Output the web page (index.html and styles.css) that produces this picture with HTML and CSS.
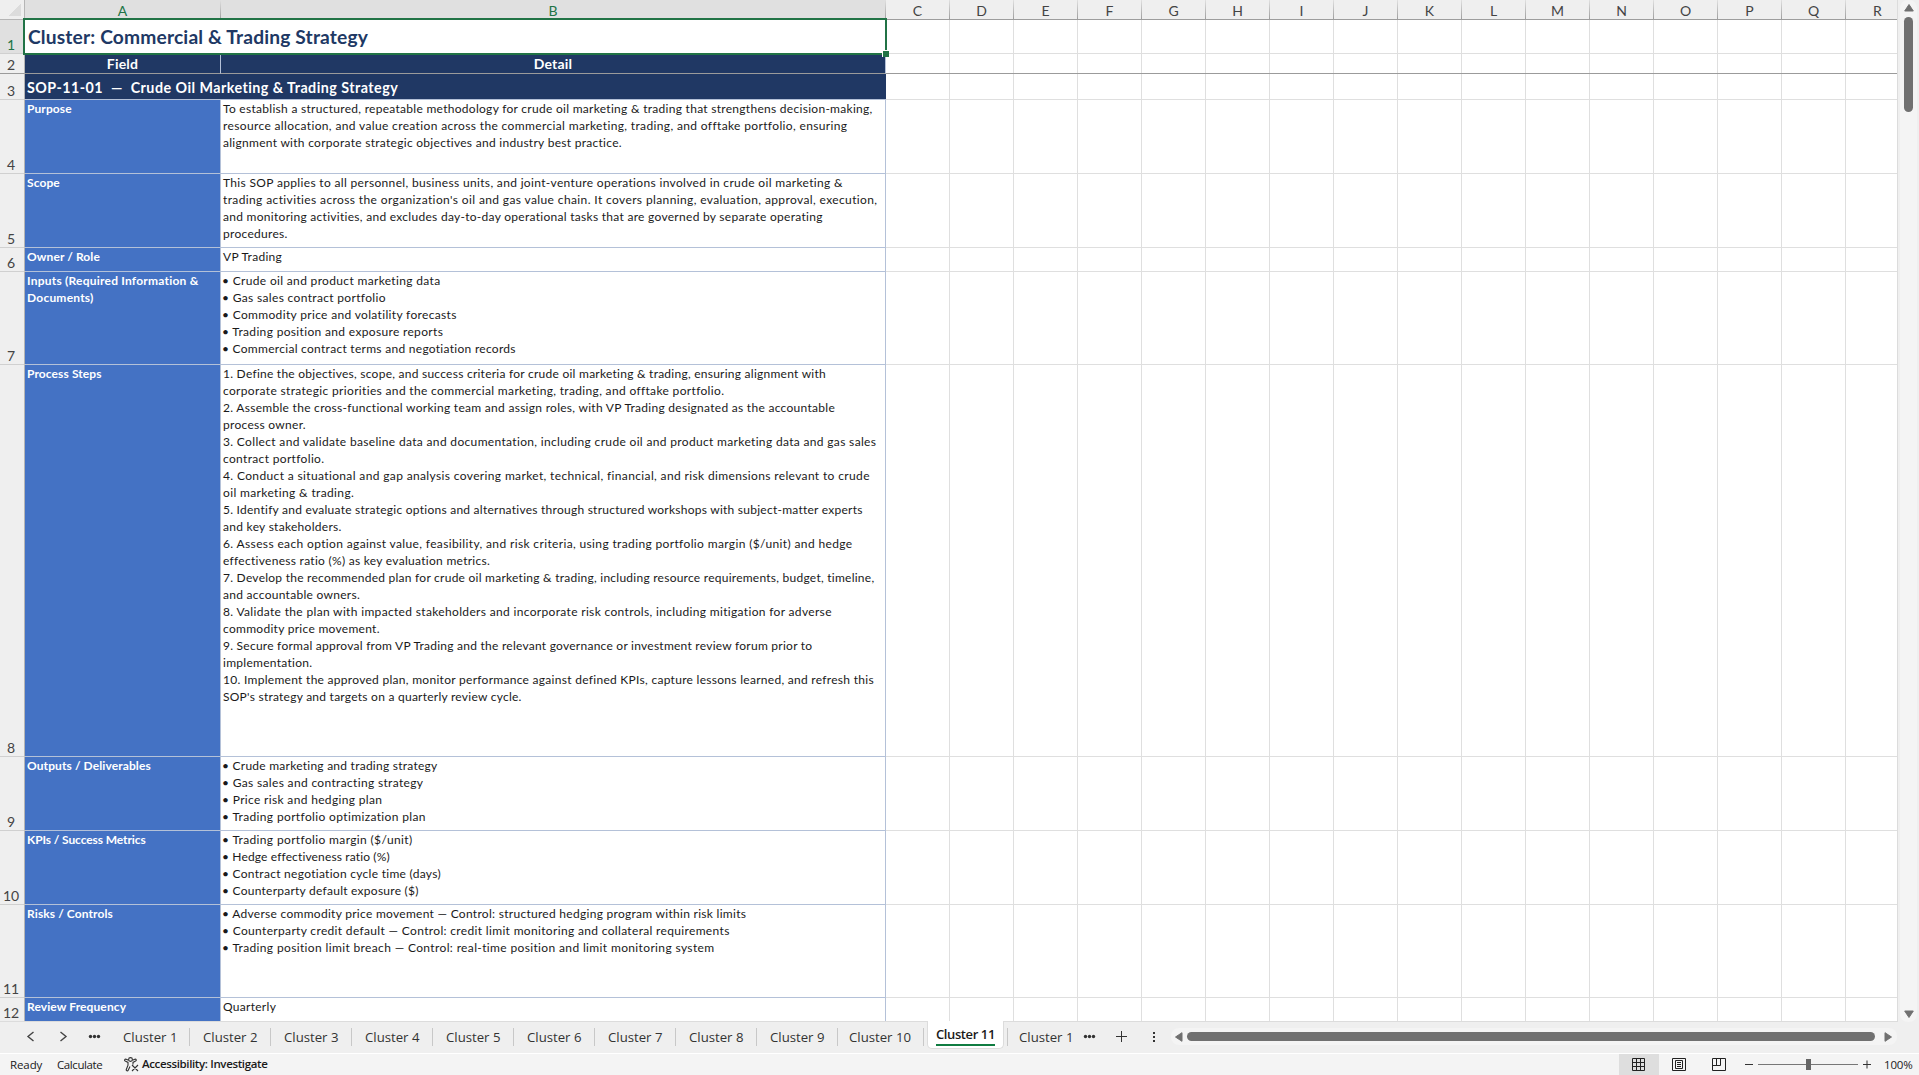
FILE: index.html
```html
<!DOCTYPE html>
<html lang="en">
<head>
  <meta charset="utf-8">
  <title>Commercial &amp; Trading Strategy</title>
  <link rel="stylesheet" href="styles.css">
</head>
<body>

<div class="main">
  <div class="sheet">
    <div class="row heads">
      <div class="corner"></div>
      <div class="col on">A</div><div class="col on">B</div>
      <div class="col">C</div><div class="col">D</div><div class="col">E</div><div class="col">F</div>
      <div class="col">G</div><div class="col">H</div><div class="col">I</div><div class="col">J</div>
      <div class="col">K</div><div class="col">L</div><div class="col">M</div><div class="col">N</div>
      <div class="col">O</div><div class="col">P</div><div class="col">Q</div><div class="col">R</div>
    </div>

    <div class="row r1">
      <div class="num on">1</div>
      <div class="title">Cluster: Commercial &amp; Trading Strategy<i class="selection"></i><i class="handle"></i></div>
      <div class="empty"></div>
    </div>
    <div class="row r2">
      <div class="num">2</div>
      <div class="th">Field</div>
      <div class="th">Detail</div>
      <div class="empty"></div>
    </div>
    <div class="row r3">
      <div class="num">3</div>
      <div class="sop">SOP-11-01&nbsp; —&nbsp; Crude Oil Marketing &amp; Trading Strategy</div>
      <div class="empty"></div>
    </div>
    <div class="row h74">
      <div class="num">4</div>
      <div class="field">Purpose</div>
      <div class="detail">
        <p>To establish a structured, repeatable methodology for crude oil marketing &amp; trading that strengthens decision-making,</p>
        <p class="wide">resource allocation, and value creation across the commercial marketing, trading, and offtake portfolio, ensuring</p>
        <p>alignment with corporate strategic objectives and industry best practice.</p>
      </div>
      <div class="empty"></div>
    </div>
    <div class="row h74">
      <div class="num">5</div>
      <div class="field">Scope</div>
      <div class="detail">
        <p class="mid">This SOP applies to all personnel, business units, and joint-venture operations involved in crude oil marketing &amp;</p>
        <p class="wider">trading activities across the organization's oil and gas value chain. It covers planning, evaluation, approval, execution,</p>
        <p>and monitoring activities, and excludes day-to-day operational tasks that are governed by separate operating</p>
        <p>procedures.</p>
      </div>
      <div class="empty"></div>
    </div>
    <div class="row r6">
      <div class="num">6</div>
      <div class="field">Owner / Role</div>
      <div class="detail"><p>VP Trading</p></div>
      <div class="empty"></div>
    </div>
    <div class="row h93">
      <div class="num">7</div>
      <div class="field wide">Inputs (Required Information &amp;<br>Documents)</div>
      <div class="detail list">
        <p class="mid">• Crude oil and product marketing data</p>
        <p class="mid">• Gas sales contract portfolio</p>
        <p class="mid">• Commodity price and volatility forecasts</p>
        <p class="mid">• Trading position and exposure reports</p>
        <p>• Commercial contract terms and negotiation records</p>
      </div>
      <div class="empty"></div>
    </div>
    <div class="row r8">
      <div class="num">8</div>
      <div class="field">Process Steps</div>
      <div class="detail">
        <p class="tight">1. Define the objectives, scope, and success criteria for crude oil marketing &amp; trading, ensuring alignment with</p>
        <p class="mid">corporate strategic priorities and the commercial marketing, trading, and offtake portfolio.</p>
        <p>2. Assemble the cross-functional working team and assign roles, with VP Trading designated as the accountable</p>
        <p>process owner.</p>
        <p class="mid">3. Collect and validate baseline data and documentation, including crude oil and product marketing data and gas sales</p>
        <p class="mid">contract portfolio.</p>
        <p class="wide">4. Conduct a situational and gap analysis covering market, technical, financial, and risk dimensions relevant to crude</p>
        <p class="wide">oil marketing &amp; trading.</p>
        <p class="tight">5. Identify and evaluate strategic options and alternatives through structured workshops with subject-matter experts</p>
        <p>and key stakeholders.</p>
        <p class="wide">6. Assess each option against value, feasibility, and risk criteria, using trading portfolio margin ($/unit) and hedge</p>
        <p>effectiveness ratio (%) as key evaluation metrics.</p>
        <p class="tight">7. Develop the recommended plan for crude oil marketing &amp; trading, including resource requirements, budget, timeline,</p>
        <p>and accountable owners.</p>
        <p class="mid">8. Validate the plan with impacted stakeholders and incorporate risk controls, including mitigation for adverse</p>
        <p>commodity price movement.</p>
        <p class="tight">9. Secure formal approval from VP Trading and the relevant governance or investment review forum prior to</p>
        <p>implementation.</p>
        <p>10. Implement the approved plan, monitor performance against defined KPIs, capture lessons learned, and refresh this</p>
        <p class="tight">SOP's strategy and targets on a quarterly review cycle.</p>
      </div>
      <div class="empty"></div>
    </div>
    <div class="row h74">
      <div class="num">9</div>
      <div class="field">Outputs / Deliverables</div>
      <div class="detail list">
        <p class="tight">• Crude marketing and trading strategy</p>
        <p class="mid">• Gas sales and contracting strategy</p>
        <p class="mid">• Price risk and hedging plan</p>
        <p class="wide">• Trading portfolio optimization plan</p>
      </div>
      <div class="empty"></div>
    </div>
    <div class="row h74">
      <div class="num">10</div>
      <div class="field kpi">KPIs / Success Metrics</div>
      <div class="detail list">
        <p class="wide">• Trading portfolio margin ($/unit)</p>
        <p class="narrow">• Hedge effectiveness ratio (%)</p>
        <p>• Contract negotiation cycle time (days)</p>
        <p class="tight">• Counterparty default exposure ($)</p>
      </div>
      <div class="empty"></div>
    </div>
    <div class="row h93">
      <div class="num">11</div>
      <div class="field">Risks / Controls</div>
      <div class="detail list">
        <p>• Adverse commodity price movement — Control: structured hedging program within risk limits</p>
        <p class="mid">• Counterparty credit default — Control: credit limit monitoring and collateral requirements</p>
        <p class="wide">• Trading position limit breach — Control: real-time position and limit monitoring system</p>
      </div>
      <div class="empty"></div>
    </div>
    <div class="row r12">
      <div class="num">12</div>
      <div class="field">Review Frequency</div>
      <div class="detail"><p>Quarterly</p></div>
      <div class="empty"></div>
    </div>
  </div>

  <div class="vscroll">
    <svg width="10" height="8"><path d="M5 .5 9.3 7H.7z" fill="#707070" stroke="#707070" stroke-linejoin="round"/></svg>
    <div class="vthumb"></div>
    <svg class="down" width="10" height="8"><path d="M5 7.5 9.3 1H.7z" fill="#707070" stroke="#707070" stroke-linejoin="round"/></svg>
  </div>
</div>

<div class="tabbar">
  <svg class="nav" width="123" height="31" fill="none" stroke="#444" stroke-width="1.4">
    <path d="M33.500 6 28 10.500l5.500 4.500M60.500 6l5.500 4.500-5.500 4.500"/>
    <g fill="#333" stroke="none"><circle cx="90.500" cy="10.500" r="1.700"/><circle cx="94.500" cy="10.500" r="1.700"/><circle cx="98.500" cy="10.500" r="1.700"/></g>
  </svg>
  <div class="tab first">Cluster 1</div>
  <div class="tab">Cluster 2</div>
  <div class="tab">Cluster 3</div>
  <div class="tab">Cluster 4</div>
  <div class="tab">Cluster 5</div>
  <div class="tab">Cluster 6</div>
  <div class="tab">Cluster 7</div>
  <div class="tab">Cluster 8</div>
  <div class="tab">Cluster 9</div>
  <div class="tab ten">Cluster 10</div>
  <div class="active"><span>Cluster 11</span></div>
  <div class="tab last">Cluster 1</div>
  <svg class="more" width="91" height="31" fill="#333">
    <circle cx="5.500" cy="10.500" r="1.700"/><circle cx="9.500" cy="10.500" r="1.700"/><circle cx="13.500" cy="10.500" r="1.700"/>
    <path d="M36 10h11v1H36zM41 5h1v11h-1zM73 6h2v2h-2zM73 10h2v2h-2zM73 14h2v2h-2z"/>
  </svg>
  <div class="hscroll">
    <svg width="8" height="10"><path d="M.5 5 7 .7v8.600z" fill="#707070" stroke="#707070" stroke-linejoin="round"/></svg>
    <div class="hthumb"></div>
    <svg width="8" height="10"><path d="M7.500 5 1 .7v8.600z" fill="#707070" stroke="#707070" stroke-linejoin="round"/></svg>
  </div>
</div>

<div class="status">
  <span class="ready">Ready</span>
  <span class="calc">Calculate</span>
  <svg class="a11y" width="16" height="16" fill="none" stroke="#333" stroke-width="1.100">
    <circle cx="6.500" cy="2.500" r="1.900"/>
    <path d="M4.600 3.200 2.200 2.200C.8 1.700 0 3.500 1.200 4.100L4 5.400V8.200L2.300 12.500c-.4 1.300 1.300 1.900 1.900.7L6 9.500M8.400 3.200l2.400-1c1.400-.4 2 1.300.8 1.900L9 5.400v2.200M8 8l6 6M14 8l-6 6"/>
  </svg>
  <span class="access">Accessibility: Investigate</span>
  <div class="views">
    <div class="view on"><svg width="14" height="14" fill="none" stroke="#222"><path d="M.5.5h12v12H.5zM4.500.5v12M8.500.5v12M.5 4.500h12M.5 8.500h12"/></svg></div>
    <div class="view"><svg width="14" height="14" fill="none" stroke="#222"><path d="M.5.5h13v12H.5zM3.500 2.500h7v8h-7zM5 4.500h4M5 6.500h4M5 8.500h4"/></svg></div>
    <div class="view"><svg width="14" height="14" fill="none" stroke="#222"><path d="M.5.5h13v12H.5zM.5 7.500h8v-7M4.500.5v7"/></svg></div>
  </div>
  <svg class="zoom" width="136" height="21"><path d="M6 10h8v1H6zM124 10h8v1h-8zM127.500 6.500h1v8h-1z" fill="#333"/><path d="M19 10h100v1H19z" fill="#777"/><path d="M67 5h5v11h-5z" fill="#666"/></svg>
  <span class="pct">100%</span>
</div>

</body>
</html>
```

FILE: styles.css
```css
* { box-sizing: border-box; }
body { margin: 0; width: 1919px; height: 1075px; overflow: hidden; background: #efefef; font-family: Lato, sans-serif; color: #1a1a1a; }
p { margin: 0; }
svg { display: block; flex: none; }

.main { display: flex; height: 1022px; }
.sheet { width: 1898px; border-right: 1px solid #dcdcdc; border-bottom: 1px solid #dcdcdc; background: white; overflow: hidden; }
.row { display: grid; grid-template-columns: 25px 196px 665px 1fr; grid-template-rows: 100%; }

/* column letters */
.heads { grid-template-columns: 25px 196px 665px repeat(15, 64px) 1fr; height: 20px; background: #efefef; }
.corner { border-right: 1px solid #b5b5b5; border-bottom: 1px solid #b5b5b5; background: linear-gradient(135deg, transparent 50%, #dcdcdc 50%) 9px 4px / 12px 12px no-repeat; }
.col { padding-top: 1px; border-bottom: 1px solid #9b9b9b; border-right: 1px solid; border-image: linear-gradient(#e4e4e4, #9b9b9b) 1; font-size: 14px; line-height: 19px; text-align: center; color: #444; }
.col:last-child { padding-left: 12px; border-right: none; }
.col.on { background: #e0e0e0; color: #217346; }

/* row numbers */
.num { display: flex; align-items: flex-end; justify-content: center; padding-right: 2px; border-right: 1px solid #b5b5b5; border-bottom: 1px solid #d0d0d0; background: #efefef; font-size: 14px; line-height: 17px; color: #444; }
.num.on { background: #e0e0e0; color: #217346; }

.empty { border-bottom: 1px solid #dfdfdf; background: repeating-linear-gradient(90deg, transparent 0 63px, #dfdfdf 63px 64px); }
.r1 { height: 34px; }
.r2 { height: 20px; }
.r3 { height: 26px; }
.r6 { height: 24px; }
.r8 { height: 392px; }
.r12 { height: 24px; }
.h74 { height: 74px; }
.h93 { height: 93px; }

.title { position: relative; grid-column: span 2; padding: 0 3px; font-size: 19.2px; font-weight: bold; letter-spacing: .16px; line-height: 33px; color: #203864; white-space: nowrap; }
.selection { position: absolute; left: -2px; top: -2px; right: -1px; bottom: -1px; border: 2px solid #217346; }
.handle { position: absolute; right: -3px; bottom: -3px; width: 7px; height: 7px; border: 1px solid white; border-right: none; border-bottom: none; background: #217346; }
.th { border-right: 1px solid #b4c1d8; border-bottom: 1px solid #9b9b9b; background: #203864; color: white; font-size: 14px; font-weight: bold; letter-spacing: .2px; line-height: 20px; text-align: center; }
.r2 .num, .r2 .empty { border-bottom-color: #9b9b9b; }
.sop { grid-column: span 2; padding: 0 2px; border-bottom: 1px solid #b4c1d8; background: #203864; color: white; font-size: 14.3px; font-weight: bold; letter-spacing: .46px; line-height: 27px; white-space: nowrap; }
.field { padding-left: 2px; border-right: 1px solid #b4c1d8; border-bottom: 1px solid #b4c1d8; background: #4472c4; color: white; font-size: 12px; font-weight: bold; letter-spacing: .1px; line-height: 17px; white-space: nowrap; }
.field.wide { letter-spacing: .22px; }
.kpi { letter-spacing: -.1px; }
.detail { padding-left: 2px; border-right: 1px solid #b4c1d8; border-bottom: 1px solid #b4c1d8; font-size: 12px; letter-spacing: .285px; line-height: 17px; white-space: nowrap; }
.list { padding-left: 1px; }
.wider { letter-spacing: .38px; }
.wide { letter-spacing: .36px; }
.mid { letter-spacing: .335px; }
.tight { letter-spacing: .25px; }
.narrow { letter-spacing: .14px; }

.vscroll { display: flex; flex-direction: column; align-items: center; width: 17px; margin-left: 2px; padding: 4px 0; border-radius: 8px; background: #f4f4f4; }
.vthumb { width: 9px; height: 95px; margin-top: 5px; border-radius: 5px; background: #707070; }
.down { margin-top: auto; }

/* sheet tabs */
.tabbar { display: flex; height: 31px; font-family: "Open Sans", sans-serif; font-size: 13.2px; }
.nav, .more { padding-top: 4px; }
.tab { width: 81px; height: 18px; margin-top: 6px; padding-left: 13px; border-right: 1px solid #c8c8c8; line-height: 18px; color: #333; white-space: nowrap; }
.first { width: 67px; padding-left: 0; }
.ten { width: 86px; padding-left: 11px; }
.active { width: 77px; height: 28px; margin: -1px 0 0 3px; padding: 4px 8px 0; border: 1px solid #dcdcdc; border-top: none; border-radius: 0 0 5px 5px; background: white; }
.active span { display: block; height: 21px; border-bottom: 2px solid #107c41; font-size: 13px; font-weight: 600; letter-spacing: -.4px; line-height: 18px; white-space: nowrap; }
.last { width: 73px; margin-left: 3px; padding-left: 11px; border-right: none; border-left: 1px solid #c8c8c8; }
.hscroll { display: flex; align-items: center; width: 726px; height: 17px; margin-top: 6px; padding-left: 4px; border-radius: 8px; background: #f4f4f4; }
.hthumb { width: 688px; height: 9px; margin: 0 9px 0 4px; border-radius: 5px; background: #707070; }

.status { display: flex; height: 22px; border-top: 1px solid white; background: #f4f4f4; font-family: "Open Sans", sans-serif; font-size: 11.500px; line-height: 21px; white-space: nowrap; }
.ready { width: 57px; padding-left: 10px; letter-spacing: -.1px; }
.calc { width: 67px; letter-spacing: -.4px; }
.a11y { margin-top: 3px; }
.access { padding-left: 2px; font-weight: 600; letter-spacing: -.36px; line-height: 19px; }
.views { display: flex; margin-left: auto; }
.view { width: 40px; padding: 4px 13px; }
.view.on { background: #dedede; }
.pct { width: 44px; padding-left: 9px; letter-spacing: -.2px; }
```
